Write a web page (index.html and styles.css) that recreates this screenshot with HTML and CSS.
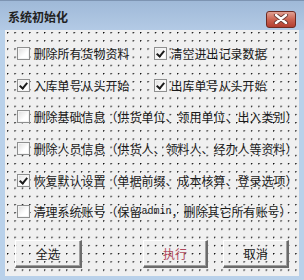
FILE: index.html
```html
<!DOCTYPE html>
<html lang="zh-CN">
<head>
    <meta charset="UTF-8">
    <title>系统初始化</title>
    <link rel="stylesheet" href="styles.css">
</head>
<body>
    <div class="window">
        <div class="titlebar">
            <span class="title">系统初始化</span>
            <span class="close-btn">
                <svg width="16" height="10" viewBox="0 0 16 10">
                    <path d="M3 1 L13 9 M13 1 L3 9" stroke="#6a3a34" stroke-width="4.2" stroke-linecap="round"/>
                    <path d="M3 1 L13 9 M13 1 L3 9" stroke="#ffffff" stroke-width="2.4" stroke-linecap="round"/>
                </svg>
            </span>
        </div>
        <div class="client">
            <div class="row two-col">
                <label class="opt"><span class="box"></span>删除所有货物资料</label>
                <label class="opt"><span class="box checked"></span>清空进出记录数据</label>
            </div>
            <div class="row two-col">
                <label class="opt"><span class="box checked"></span>入库单号从头开始</label>
                <label class="opt"><span class="box checked"></span>出库单号从头开始</label>
            </div>
            <div class="row">
                <label class="opt"><span class="box"></span>删除基础信息（供货单位、领用单位、出入类别）</label>
            </div>
            <div class="row">
                <label class="opt"><span class="box"></span>删除人员信息（供货人、领料人、经办人等资料）</label>
            </div>
            <div class="row">
                <label class="opt"><span class="box checked"></span>恢复默认设置（单据前缀、成本核算、登录选项）</label>
            </div>
            <div class="row">
                <label class="opt"><span class="box"></span>清理系统账号（保留<span class="latin">admin</span>，删除其它所有账号）</label>
            </div>
            <div class="buttons">
                <button class="btn">全选</button>
                <button class="btn btn-run">执行</button>
                <button class="btn btn-cancel">取消</button>
            </div>
        </div>
    </div>
</body>
</html>
```

FILE: styles.css
```css
/* 窗口外框 */
body {
    margin: 0;
    background-color: #b9d1ea;
    font-family: "Noto Sans CJK SC", "Liberation Sans", sans-serif;
}

.window {
    width: 304px;
    height: 280px;
    background-color: #b9d1ea;
    display: flex;
    flex-direction: column;
}

/* 标题栏 */
.titlebar {
    height: 30px;
    flex: none;
    display: flex;
    align-items: center;
    justify-content: space-between;
    padding: 0 8px 0 8px;
    box-sizing: border-box;
    background: linear-gradient(#9fb9d8, #b3cae5);
    border-top: 1px solid #7d94b2;
}

.title {
    font-size: 12px;
    font-weight: bold;
    color: #222;
    margin-top: 2px;
}

.close-btn {
    width: 30px;
    height: 17px;
    margin-top: 7px;
    box-sizing: border-box;
    border: 1px solid #6e2b23;
    border-radius: 3px;
    background: linear-gradient(#e0a194, #cc6452 50%, #b33e30);
    display: flex;
    align-items: center;
    justify-content: center;
}

/* 设计模式网格背景 */
.client {
    flex: 1;
    margin: 0 5px 4px 5px;
    background-color: #f0f0f0;
    background-image: radial-gradient(circle at 0.6px 0.6px, #000 0.6px, transparent 1px);
    background-size: 7.4px 8.2px;
    background-position: 2px 2px;
    padding: 8px 10px 0 10px;
    box-sizing: border-box;
}

.row {
    height: 31.6px;
    display: flex;
    align-items: center;
}

.two-col .opt {
    width: 156px;
}

.opt {
    display: flex;
    align-items: center;
    font-size: 12px;
    color: #1a1a1a;
    white-space: nowrap;
    padding-left: 1.5px;
}

.latin {
    font-family: "Liberation Mono", monospace;
    font-size: 10px;
}

/* 复选框 */
.box {
    width: 13px;
    height: 13px;
    box-sizing: border-box;
    border: 1px solid #8e8f8f;
    background: linear-gradient(135deg, #dcdcdc, #ffffff 60%);
    box-shadow: inset 0 0 0 1px #f4f4f4;
    margin-right: 4px;
    flex: none;
    position: relative;
}

.box.checked::after {
    content: "";
    position: absolute;
    left: 3px;
    top: 1px;
    width: 3px;
    height: 6px;
    border-right: 2px solid #1c1c1c;
    border-bottom: 2px solid #1c1c1c;
    transform: rotate(40deg);
}

/* 按钮 */
.buttons {
    display: flex;
    margin-top: 12px;
}

.btn {
    width: 67px;
    height: 28px;
    background: transparent;
    border-style: solid;
    border-width: 1px 2px 2px 1px;
    border-color: #ffffff #6b6b6b #6b6b6b #ffffff;
    box-shadow: inset -1px -1px 0 #a0a0a0;
    font-family: "Noto Sans CJK SC", sans-serif;
    font-size: 12px;
    color: #1a1a1a;
    padding: 0;
}

.btn-run {
    margin-left: 61px;
    width: 66px;
    color: #b0465a;
}

.btn-cancel {
    margin-left: 15px;
    width: 66px;
}
```
